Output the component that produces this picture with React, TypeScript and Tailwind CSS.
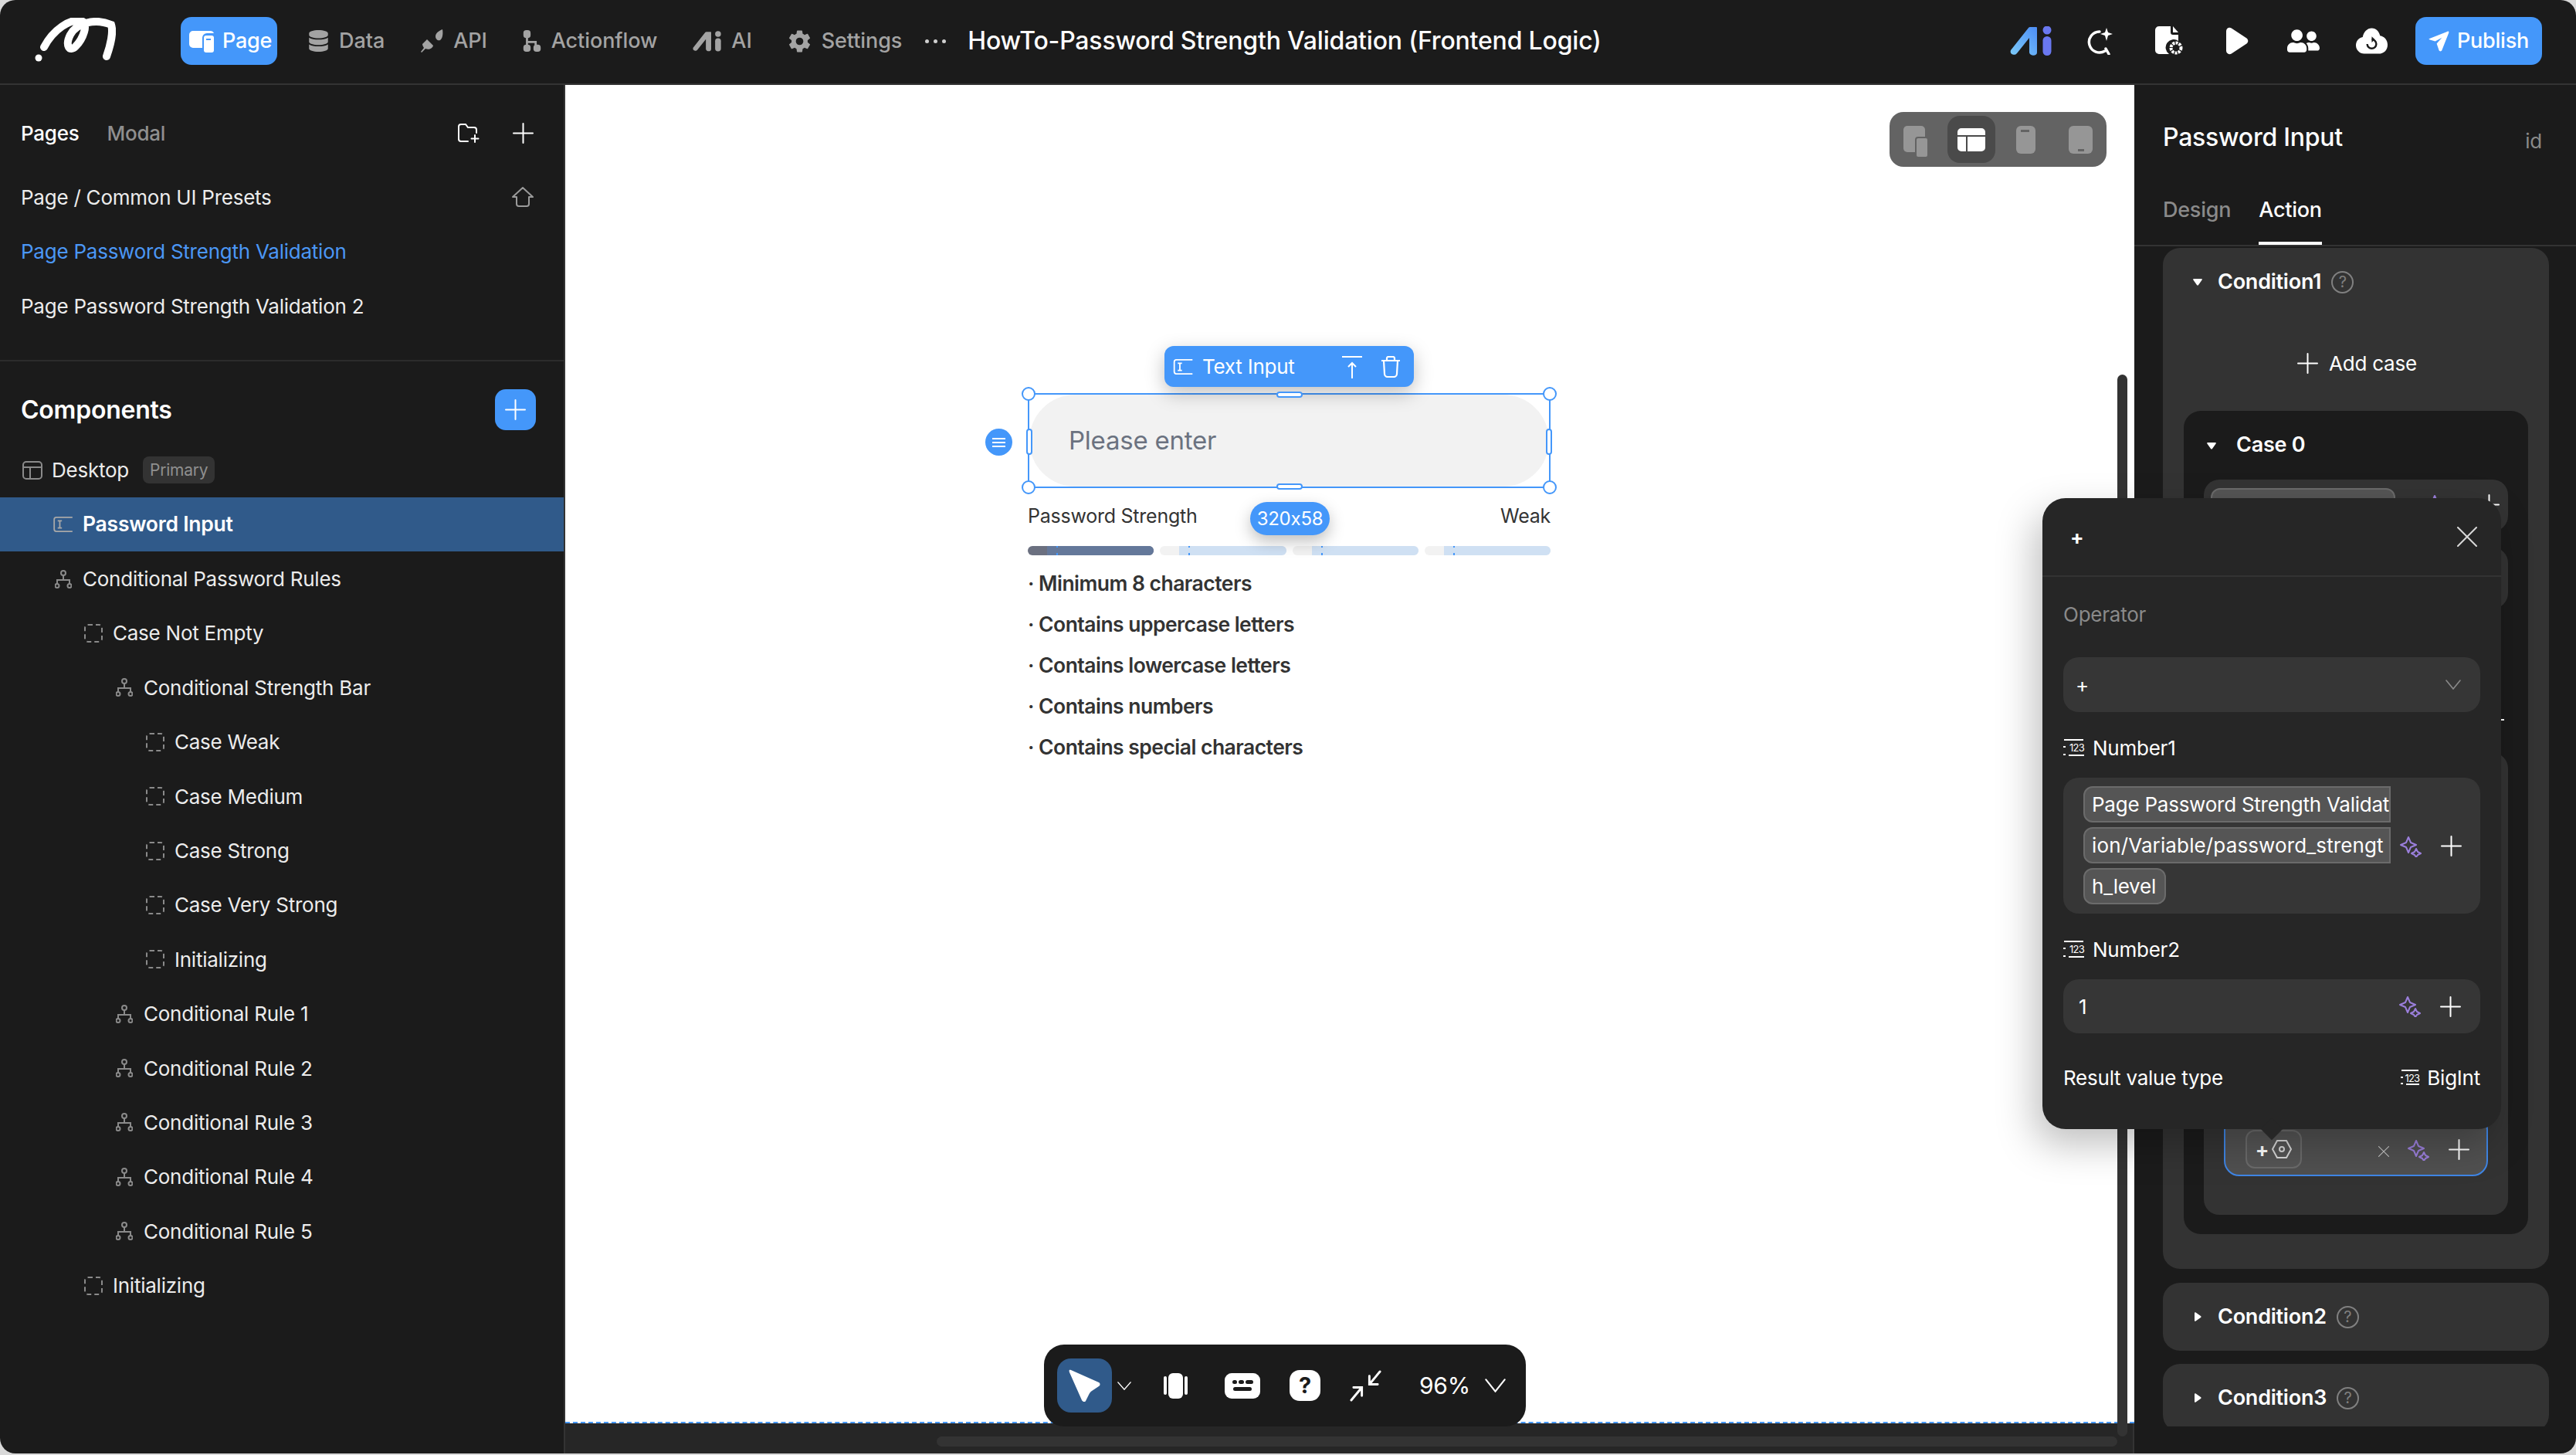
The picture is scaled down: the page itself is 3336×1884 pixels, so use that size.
import { FaDatabase, FaUserFriends } from "react-icons/fa";
import { IoSettingsSharp } from "react-icons/io5";

function Logo() {
  return (
    <svg viewBox="0 0 105 60" className="h-[60px] w-[105px]" fill="none" stroke="white" strokeWidth="10" strokeLinecap="round">
      <path d="M12 38C24 15 46 1 60 4 71 7 62 28 53 37 45 45 39 36 46 22 54 7 78 0 99 9 102 18 98 36 93 50" />
      <circle cx="5" cy="52" r="4.5" fill="white" stroke="none" />
    </svg>
  );
}

function Cross({ className, size = 27 }: { className?: string; size?: number }) {
  return (
    <svg viewBox="0 0 27 27" width={size} height={size} className={className} fill="none" stroke="currentColor" strokeWidth="2" strokeLinecap="round">
      <path d="M13.5 1v25M1 13.5h25" />
    </svg>
  );
}

function Close({ className, size = 26 }: { className?: string; size?: number }) {
  return (
    <svg viewBox="0 0 26 26" width={size} height={size} className={className} fill="none" stroke="currentColor" strokeWidth="2" strokeLinecap="round">
      <path d="M1 1l24 24M25 1L1 25" />
    </svg>
  );
}

function Caret({ className, w, h }: { className?: string; w: number; h: number }) {
  return (
    <svg viewBox="0 0 20 13" width={w} height={h} preserveAspectRatio="none" className={className} fill="none" stroke="currentColor" strokeWidth="1.6" strokeLinecap="round">
      <path d="M1 1l9 11 9-11" />
    </svg>
  );
}

function FolderAdd() {
  return (
    <svg viewBox="0 0 29 25" className="h-[25px] w-[29px]" fill="none" stroke="white" strokeWidth="2" strokeLinecap="round">
      <path d="M14 23H5a3 3 0 0 1-3-3V4a3 3 0 0 1 3-3h6l3 4h8a3 3 0 0 1 3 3v4" />
      <path d="M23 15v9M18.5 19.5h9" />
    </svg>
  );
}

function HomeIcon() {
  return (
    <svg viewBox="0 0 28 26" className="h-[26px] w-[28px]" fill="none" stroke="#9a9a9a" strokeWidth="2" strokeLinejoin="round">
      <path d="M14 1l13 12h-5v9a3 3 0 0 1-3 3H9a3 3 0 0 1-3-3v-9H1z" />
    </svg>
  );
}

function PageIcon() {
  return (
    <svg viewBox="0 0 33 30" className="h-[30px] w-[33px]" fill="white">
      <path d="M5 2h22a5 5 0 0 1 5 3H23a6 6 0 0 0-6 6v13H5a5 5 0 0 1-5-5V7a5 5 0 0 1 5-5z" />
      <rect x="19" y="8" width="13" height="22" rx="3" />
      <rect x="22" y="12" width="6" height="2" fill="#4497fa" />
    </svg>
  );
}

function ApiIcon() {
  return (
    <svg viewBox="0 0 30 32" className="h-[32px] w-[30px]" fill="#a3a3a3">
      <path d="M20 10c0-4 4-7 9-9 1 6 0 12-3 14-3 1-6-1-6-5z" />
      <path d="M3 20l6-6 8 8c-1 4-6 6-10 4l-5 5-1-1 4-5c-1-2-2-3-2-5z" />
    </svg>
  );
}

function FlowIcon({ className }: { className: string }) {
  return (
    <svg viewBox="0 0 24 30" className={className} fill="#a3a3a3">
      <rect x="0" y="0" width="10" height="11" rx="4" />
      <rect x="0" y="20" width="10" height="10" rx="4" />
      <rect x="14" y="20" width="10" height="10" rx="4" />
      <path d="M3.5 10h3v5h12v6h-3v-3h-9v3h-3z" />
    </svg>
  );
}

function AiMark({ a, b, c, id }: { a: string; b: string; c: string; id: string }) {
  return (
    <svg viewBox="0 0 54 38" className="h-full w-full">
      <defs>
        <linearGradient id={id} x1="0" y1="1" x2="1" y2="0">
          <stop offset="0" stopColor={a} />
          <stop offset="1" stopColor={b} />
        </linearGradient>
      </defs>
      <path d="M26 1h8a1 1 0 0 1 1 1v32c0 5-9 5-10 0V15L9 35c-3 4-10 1-8-4L24 2a3 3 0 0 1 2-1z" fill={`url(#${id})`} />
      <circle cx="48" cy="5" r="5.5" fill={c} />
      <rect x="42.5" y="13" width="11" height="25" rx="5.5" fill={c} />
    </svg>
  );
}

function SearchSpark() {
  return (
    <svg viewBox="0 0 34 36" className="h-[36px] w-[34px]" fill="none" stroke="white" strokeWidth="3.5" strokeLinecap="round">
      <path d="M17 6A13.5 13.5 0 1 0 24 31" />
      <path d="M25 28l4 7" />
      <path d="M26 1l2 6 6 2-6 2-2 7-2-7-6-2 6-2z" fill="white" stroke="none" />
    </svg>
  );
}

function DocGear() {
  return (
    <svg viewBox="0 0 36 38" className="h-[38px] w-[36px]" fill="white">
      <path d="M5 0h15v8a3 3 0 0 0 3 3h7v8a10 10 0 0 0-12 17H5a5 5 0 0 1-5-5V5a5 5 0 0 1 5-5z" />
      <path d="M23 0l7 8h-7z" />
      <circle cx="27" cy="28" r="6.5" fill="none" stroke="white" strokeWidth="4" strokeDasharray="3 1.2" />
    </svg>
  );
}

function PlayIcon() {
  return (
    <svg viewBox="0 0 30 36" className="h-[36px] w-[29px]" fill="white">
      <path d="M0 5c0-4 4-6 7-4l20 13c3 2 3 6 0 8L7 35c-3 2-7 0-7-4z" />
    </svg>
  );
}

function CloudIcon() {
  return (
    <svg viewBox="0 0 42 34" className="h-[34px] w-[41px]" fill="white">
      <path d="M21 0c6 0 10 5 11 10 6 1 10 6 10 12 0 7-5 12-12 12H11C5 34 0 29 0 23c0-6 4-10 9-11 1-7 6-12 12-12z" />
      <path d="M15 21a6 6 0 1 0 6-6" fill="none" stroke="#1b1b1b" strokeWidth="2.5" />
      <path d="M21 11v8l4-4z" fill="#1b1b1b" />
    </svg>
  );
}

function SendIcon() {
  return (
    <svg viewBox="0 0 28 28" className="h-[27px] w-[27px]" fill="white">
      <path d="M2 10L25 1c2-1 3 0 2 2l-9 23c-1 2-3 2-4 0l-3-9 7-8-9 5-7-2c-2-1-2-1 0-2z" />
    </svg>
  );
}

function BucketIcon() {
  return (
    <svg viewBox="0 0 26 28" className="h-[28px] w-[26px]" fill="none" stroke="white" strokeWidth="2.2" strokeLinejoin="round">
      <path d="M1 6h24M8 6V3a2 2 0 0 1 2-2h6a2 2 0 0 1 2 2v3" />
      <path d="M4 6l1 17a4 4 0 0 0 4 4h8a4 4 0 0 0 4-4l1-17" />
    </svg>
  );
}

function CaseIcon() {
  return <div className="h-[24px] w-[24px] rounded-[5px] border-2 border-dashed border-[#8a8a8a]" />;
}

function BranchIcon() {
  return (
    <svg viewBox="0 0 22 24" className="h-[24px] w-[22px]" fill="none" stroke="#8a8a8a" strokeWidth="2">
      <circle cx="11" cy="4" r="3" />
      <circle cx="3" cy="20.5" r="2.5" />
      <circle cx="19" cy="20.5" r="2.5" />
      <path d="M11 7v6M3 18v-5h16v5" />
    </svg>
  );
}

function LayoutIcon() {
  return (
    <svg viewBox="0 0 26 24" className="h-[24px] w-[26px]" fill="none" stroke="#8a8a8a" strokeWidth="2">
      <rect x="1" y="1" width="24" height="22" rx="4" />
      <path d="M1 8h24M10 8v15" />
    </svg>
  );
}

function InputIcon({ color }: { color: string }) {
  return (
    <svg viewBox="0 0 28 22" className="h-[20px] w-[27px]" fill="none" stroke={color} strokeWidth="2">
      <path d="M27 1H4a3 3 0 0 0-3 3v14a3 3 0 0 0 3 3h23" />
      <path d="M6 6h6M6 16h6M9 6v10" />
    </svg>
  );
}

function Sparkle() {
  return (
    <svg viewBox="0 0 28 28" className="h-[28px] w-[28px]" fill="none" stroke="#9b7fdc" strokeWidth="2" strokeLinejoin="round">
      <path d="M11 2l3 7 7 3-7 3-3 7-3-7-7-3 7-3z" />
      <path d="M21 17l2 4 4 2-4 2-2 3-2-3-4-2 4-2z" />
    </svg>
  );
}

function NumType({ small }: { small?: boolean }) {
  return (
    <div className={small ? "relative h-[20px] w-[24px] shrink-0" : "relative h-[22px] w-[27px] shrink-0"}>
      <div className="absolute left-[1px] right-[1px] top-0 h-[2px] bg-white" />
      <div className="absolute bottom-0 left-[7px] right-0 h-[2px] bg-white" />
      <span className="absolute right-0 top-[4px] text-[13px] leading-[14px] tracking-[-0.06em] text-white">123</span>
      <div className="absolute left-0 top-[9px] h-[2px] w-[3px] bg-white" />
      <div className="absolute bottom-[1px] left-0 h-[2px] w-[3px] bg-white" />
    </div>
  );
}

function Help() {
  return (
    <div className="flex h-[29px] w-[29px] items-center justify-center rounded-full border-2 border-[#808080] text-[20px] leading-none text-[#808080]">?</div>
  );
}

function Tri({ down }: { down?: boolean }) {
  return (
    <svg viewBox="0 0 12 12" className="h-[12px] w-[12px]" fill="white">
      {down ? <path d="M1 2h10c1 0 1 1 .6 1.6L7 10c-.5.8-1.5.8-2 0L.4 3.6C0 3 0 2 1 2z" /> : <path d="M2 1v10c0 1 1 1 1.6.6L10 7c.8-.5.8-1.5 0-2L3.6.4C3 0 2 0 2 1z" />}
    </svg>
  );
}

const navItems = [
  { label: "Data", icon: <FaDatabase className="h-[28px] w-[27px] text-[#a3a3a3]" /> },
  { label: "API", icon: <ApiIcon /> },
  { label: "Actionflow", icon: <FlowIcon className="h-[28px] w-[24px]" /> },
  { label: "AI", icon: <div className="h-[27px] w-[37px]"><AiMark a="#a3a3a3" b="#a3a3a3" c="#a3a3a3" id="navai" /></div> },
  { label: "Settings", icon: <IoSettingsSharp className="h-[31px] w-[31px] text-[#a3a3a3]" /> },
];

function TopBar() {
  return (
    <header className="flex h-[110px] shrink-0 items-center border-b-2 border-[#333333] bg-[#1b1b1b] pb-[2px]">
      <div className="ml-[45px] w-[189px]">
        <Logo />
      </div>
      <div className="flex h-[62px] w-[125px] items-center gap-[10px] rounded-[14px] bg-[#4497fa] pl-[11px]">
        <PageIcon />
        <span className="text-[27px] font-medium text-white">Page</span>
      </div>
      <nav className="ml-[40px] flex items-center gap-[46px] tracking-[-0.005em]">
        {navItems.map((item) => (
          <div key={item.label} className="flex items-center gap-[13px] text-[27px] font-medium text-[#a3a3a3]">
            {item.icon}
            <span>{item.label}</span>
          </div>
        ))}
      </nav>
      <div className="ml-[30px] flex w-[55px] gap-[6px]">
        <span className="h-[5px] w-[5px] rounded-full bg-[#cfcfcf]" />
        <span className="h-[5px] w-[5px] rounded-full bg-[#cfcfcf]" />
        <span className="h-[5px] w-[5px] rounded-full bg-[#cfcfcf]" />
      </div>
      <h1 className="text-[32px] font-medium tracking-[-0.006em] text-white">HowTo-Password Strength Validation (Frontend Logic)</h1>
      <div className="ml-auto flex items-center">
        <div className="h-[38px] w-[54px]"><AiMark a="#7ccbf8" b="#4d8df5" c="#6a78f0" id="topai" /></div>
        <div className="ml-[45px]"><SearchSpark /></div>
        <div className="ml-[55px]"><DocGear /></div>
        <div className="ml-[56px]"><PlayIcon /></div>
        <FaUserFriends className="ml-[50px] h-[38px] w-[42px] text-white" />
        <div className="ml-[47px]"><CloudIcon /></div>
        <div className="ml-[36px] mr-[44px] flex h-[62px] w-[164px] items-center justify-center gap-[10px] rounded-[14px] bg-[#4497fa] text-[27px] font-medium text-white">
          <SendIcon />
          <span>Publish</span>
        </div>
      </div>
    </header>
  );
}

const tree = [
  { label: "Password Input", pad: "pl-[69px]", kind: "input", selected: true },
  { label: "Conditional Password Rules", pad: "pl-[69px]", kind: "branch" },
  { label: "Case Not Empty", pad: "pl-[108px]", kind: "case" },
  { label: "Conditional Strength Bar", pad: "pl-[148px]", kind: "branch" },
  { label: "Case Weak", pad: "pl-[188px]", kind: "case" },
  { label: "Case Medium", pad: "pl-[188px]", kind: "case" },
  { label: "Case Strong", pad: "pl-[188px]", kind: "case" },
  { label: "Case Very Strong", pad: "pl-[188px]", kind: "case" },
  { label: "Initializing", pad: "pl-[188px]", kind: "case" },
  { label: "Conditional Rule 1", pad: "pl-[148px]", kind: "branch" },
  { label: "Conditional Rule 2", pad: "pl-[148px]", kind: "branch" },
  { label: "Conditional Rule 3", pad: "pl-[148px]", kind: "branch" },
  { label: "Conditional Rule 4", pad: "pl-[148px]", kind: "branch" },
  { label: "Conditional Rule 5", pad: "pl-[148px]", kind: "branch" },
  { label: "Initializing", pad: "pl-[108px]", kind: "case" },
];

function LeftPanel() {
  return (
    <aside className="flex w-[732px] shrink-0 flex-col border-r-2 border-[#333333] bg-[#1b1b1b] text-[26px] text-[#ececec]">
      <section className="h-[358px] border-b-2 border-[#2c2c2c]">
        <div className="flex h-[110px] items-center pl-[27px] pr-[39px] pt-[14px]">
          <span className="font-medium text-white">Pages</span>
          <span className="ml-[36px] font-medium text-[#8f8f8f]">Modal</span>
          <div className="ml-auto"><FolderAdd /></div>
          <Cross className="ml-[43px] text-white" />
        </div>
        <div className="flex h-[70px] items-center pl-[27px] pr-[39px]">
          <span>Page / Common UI Presets</span>
          <div className="ml-auto"><HomeIcon /></div>
        </div>
        <div className="flex h-[71px] items-center pl-[27px] text-[#4b97f5]">Page Password Strength Validation</div>
        <div className="flex h-[70px] items-center pl-[27px]">Page Password Strength Validation 2</div>
      </section>
      <div className="flex h-[105px] items-center pl-[27px] pr-[36px] pt-[20px]">
        <span className="text-[32px] font-semibold text-white">Components</span>
        <div className="ml-auto flex h-[53px] w-[53px] items-center justify-center rounded-[14px] bg-[#4497fa]">
          <Cross className="text-white" />
        </div>
      </div>
      <div className="flex h-[71px] items-center pl-[29px]">
        <div className="flex w-[26px] justify-center"><LayoutIcon /></div>
        <span className="ml-[12px]">Desktop</span>
        <span className="ml-[18px] flex h-[35px] items-center rounded-[8px] bg-[#333333] px-[9px] text-[21px] text-[#8f8f8f]">Primary</span>
      </div>
      {tree.map((row, i) => (
        <div key={i} className={row.selected ? "flex h-[70.4px] items-center bg-[#305a8a] pl-[69px] text-[26.5px] font-semibold text-white" : `flex h-[70.4px] items-center ${row.pad}`}>
          <div className="flex w-[26px] justify-center">
            {row.kind === "input" && <InputIcon color="#a8a8a8" />}
            {row.kind === "branch" && <BranchIcon />}
            {row.kind === "case" && <CaseIcon />}
          </div>
          <span className="ml-[12px]">{row.label}</span>
        </div>
      ))}
    </aside>
  );
}

function DeviceSwitch() {
  return (
    <div className="absolute right-[36px] top-[35px] flex h-[71px] w-[281px] items-center rounded-[18px] bg-[#636363] pl-[18px]">
      <div className="relative h-[60px] w-[38px]">
        <div className="absolute left-0 top-[12px] h-[34px] w-[28px] rounded-[5px] bg-[#969696]" />
        <div className="absolute left-[15px] top-[26px] h-[28px] w-[18px] rounded-[4px] border-2 border-[#636363] bg-[#969696]" />
      </div>
      <div className="ml-[19px] flex h-[61px] w-[62px] items-center justify-center rounded-[16px] bg-[#4a4a4a]">
        <svg viewBox="0 0 36 30" className="h-[30px] w-[36px]" fill="white">
          <path d="M5 0h26a5 5 0 0 1 5 5v4H0V5a5 5 0 0 1 5-5zM0 11h11v19H5a5 5 0 0 1-5-5zM13 11h23v14a5 5 0 0 1-5 5H13z" />
        </svg>
      </div>
      <div className="relative ml-[27px] h-[36px] w-[25px] rounded-[6px] bg-[#969696]">
        <div className="absolute left-[6px] top-[5px] h-[3px] w-[11px] bg-[#636363]" />
      </div>
      <div className="relative ml-[43px] h-[36px] w-[31px] rounded-[6px] bg-[#969696]">
        <div className="absolute bottom-[3px] left-[12px] h-[3px] w-[8px] bg-[#636363]" />
      </div>
    </div>
  );
}

function Handle({ className }: { className: string }) {
  return <div className={`absolute rounded-full border-2 border-[#4497fa] bg-white ${className}`} />;
}

function StrengthBar({ first }: { first?: boolean }) {
  return (
    <div className={first ? "relative h-[12px] flex-1 overflow-hidden rounded-full bg-[#6b7080]" : "relative h-[12px] flex-1 overflow-hidden rounded-full bg-[#f2f2f2]"}>
      <div className={first ? "absolute inset-y-0 left-[25px] right-0 bg-[#64789a]" : "absolute inset-y-0 left-[25px] right-0 bg-[#cfe0f3]"} />
      <div className="absolute left-[37px] top-0 h-[2px] w-[2px] bg-[#4497fa]" />
      <div className="absolute bottom-0 left-[37px] h-[3px] w-[2px] bg-[#4497fa]" />
    </div>
  );
}

const rules = ["Minimum 8 characters", "Contains uppercase letters", "Contains lowercase letters", "Contains numbers", "Contains special characters"];

function PasswordWidget() {
  return (
    <div className="ml-[599px] w-[677px] pt-[399px] text-[#333333]">
      <div className="relative h-[123px] border-2 border-[#4497fa]">
        <div className="flex h-full items-center rounded-full bg-[#f2f2f2] pl-[51px] text-[33px] text-[#6b7280]">Please enter</div>
        <div className="absolute left-[175px] top-[-63px] flex h-[53px] w-[323px] items-center rounded-[12px] bg-[#4497fa] pl-[11px] text-[26px] text-white shadow-[0_8px_24px_rgba(0,0,0,0.25)]">
          <InputIcon color="white" />
          <span className="ml-[11px]">Text Input</span>
          <svg viewBox="0 0 26 30" className="ml-auto h-[30px] w-[26px]" fill="none" stroke="white" strokeWidth="2">
            <path d="M0 2h26M13 30V10M8 15l5-5 5 5" />
          </svg>
          <div className="ml-[24px] mr-[17px]"><BucketIcon /></div>
        </div>
        <Handle className="left-[-10px] top-[-10px] h-[18px] w-[18px]" />
        <Handle className="right-[-10px] top-[-10px] h-[18px] w-[18px]" />
        <Handle className="bottom-[-10px] left-[-10px] h-[18px] w-[18px]" />
        <Handle className="bottom-[-10px] right-[-10px] h-[18px] w-[18px]" />
        <Handle className="left-[320px] top-[-4px] h-[8px] w-[34px]" />
        <Handle className="bottom-[-4px] left-[320px] h-[8px] w-[34px]" />
        <Handle className="left-[-4px] top-[44px] h-[34px] w-[8px]" />
        <Handle className="right-[-4px] top-[44px] h-[34px] w-[8px]" />
        <div className="absolute left-[-57px] top-[44px] flex h-[35px] w-[35px] flex-col items-center justify-center gap-[3px] rounded-full bg-[#4497fa]">
          <span className="h-[2px] w-[17px] bg-white" />
          <span className="h-[2px] w-[17px] bg-white" />
          <span className="h-[2px] w-[17px] bg-white" />
        </div>
        <div className="absolute left-[286px] top-[139px] z-10 flex h-[43px] w-[103px] items-center justify-center rounded-full bg-[#4497fa] text-[24px] text-white shadow-[0_8px_20px_rgba(0,0,0,0.25)]">320x58</div>
      </div>
      <div className="mt-[19px] flex h-[36px] items-center justify-between text-[25px]">
        <span>Password Strength</span>
        <span>Weak</span>
      </div>
      <div className="mt-[20px] flex gap-[8px]">
        <StrengthBar first />
        <StrengthBar />
        <StrengthBar />
        <StrengthBar />
      </div>
      <ul className="mt-[10px] text-[26.5px] font-semibold">
        {rules.map((rule) => (
          <li key={rule} className="flex h-[53px] items-center whitespace-pre tracking-[-0.02em]">· {rule}</li>
        ))}
      </ul>
    </div>
  );
}

function CanvasToolbar() {
  return (
    <div className="absolute bottom-[35px] left-[620px] flex h-[106px] w-[624px] items-center rounded-[26px] bg-[#1b1b1b] pl-[17px] text-white">
      <div className="flex h-[70px] w-[71px] items-center justify-center rounded-[18px] bg-[#305a8a]">
        <svg viewBox="0 0 42 42" className="h-[42px] w-[42px]" fill="white">
          <path d="M3 1l36 16c2 1 2 4 0 5l-9 6c-2 1-3 3-4 5l-4 8c-1 2-4 1-5-1L1 4C0 1 1 0 3 1z" />
        </svg>
      </div>
      <Caret className="ml-[7px]" w={18} h={11} />
      <div className="ml-[42px] flex h-[33px] items-center gap-[2px]">
        <span className="h-[24px] w-[4px] rounded-full bg-white" />
        <span className="h-[33px] w-[19px] rounded-[6px] bg-white" />
        <span className="h-[24px] w-[4px] rounded-full bg-white" />
      </div>
      <div className="ml-[48px] flex h-[33px] w-[46px] flex-col items-center justify-center gap-[4px] rounded-[9px] bg-white">
        <div className="flex gap-[2px]">
          <span className="h-[5px] w-[6px] rounded-full bg-[#1b1b1b]" />
          <span className="h-[5px] w-[7px] rounded-full bg-[#1b1b1b]" />
          <span className="h-[5px] w-[10px] rounded-full bg-[#1b1b1b]" />
        </div>
        <span className="h-[5px] w-[24px] rounded-full bg-[#1b1b1b]" />
      </div>
      <div className="ml-[38px] flex h-[40px] w-[40px] items-center justify-center rounded-[13px] bg-white text-[29px] font-bold text-[#1b1b1b]">?</div>
      <svg viewBox="0 0 42 42" className="ml-[38px] h-[41px] w-[41px]" fill="none" stroke="white" strokeWidth="3" strokeLinecap="round">
        <path d="M40 2L26 19M26 8v11h11M2 40l14-17M16 34V23H5" />
      </svg>
      <span className="ml-[49px] text-[30px]">96%</span>
      <Caret className="ml-[19px]" w={27} h={18} />
    </div>
  );
}

function Middle() {
  return (
    <main className="relative flex min-w-0 flex-1 flex-col overflow-hidden">
      <div className="relative flex-1 border-b-2 border-dashed border-[#4497fa] bg-white">
        <DeviceSwitch />
        <PasswordWidget />
      </div>
      <div className="relative h-[39px] shrink-0 border-r-2 border-[#333333] bg-[#262626]">
        <div className="absolute left-[481px] right-[20px] top-[17px] h-[13px] rounded-full bg-[#333333]" />
      </div>
      <div className="absolute right-[9px] top-[375px] h-[1375px] w-[13px] rounded-full bg-[#333333]" />
      <CanvasToolbar />
    </main>
  );
}

function ConditionHead({ label, open }: { label: string; open?: boolean }) {
  return (
    <div className="flex h-[88px] items-center pl-[39px]">
      <Tri down={open} />
      <span className="ml-[20px] text-[27px] font-semibold text-white">{label}</span>
      <div className="ml-[13px]"><Help /></div>
    </div>
  );
}

function RightPanel() {
  return (
    <aside className="flex w-[572px] shrink-0 flex-col overflow-hidden bg-[#1b1b1b] text-white">
      <div className="flex h-[113px] items-end justify-between pb-[21px] pl-[37px] pr-[44px]">
        <span className="text-[32px] font-medium">Password Input</span>
        <span className="text-[26px] text-[#8a8a8a]">id</span>
      </div>
      <div className="flex h-[96px] shrink-0 gap-[36px] border-b-2 border-[#333333] pl-[37px] text-[27px] font-medium">
        <span className="pt-[29px] text-[#8a8a8a]">Design</span>
        <span className="h-[94px] border-b-4 border-white pt-[29px]">Action</span>
      </div>
      <div className="h-[1528px] overflow-hidden pl-[37px] pr-[35px] pt-[2px]">
        <section className="h-[1322px] rounded-[22px] bg-[#333333]">
          <ConditionHead label="Condition1" open />
          <div className="flex h-[123px] items-center justify-center gap-[14px] pl-[3px] text-[26px]">
            <Cross />
            Add case
          </div>
          <div className="mx-[27px] h-[1066px] rounded-[22px] bg-[#1b1b1b]">
            <div className="flex h-[89px] items-center pl-[30px] text-[27px] font-semibold">
              <Tri down />
              <span className="ml-[26px]">Case 0</span>
            </div>
            <div className="mx-[26px] flex h-[67px] gap-[40px] rounded-[20px] bg-[#333333] pl-[9px] pt-[11px]">
              <div className="h-[47px] w-[239px] rounded-[12px] border-2 border-[#6b6b6b] bg-[#555555]" />
              <div className="mt-[8px]"><Sparkle /></div>
              <Cross className="mt-[8px]" />
            </div>
            <div className="mx-[26px] mt-[21px] h-[79px] rounded-[20px] bg-[#333333]" />
            <div className="mx-[26px] flex h-[187px] items-center justify-end">
              <span className="mr-[5px] mt-[100px] h-[2px] w-[5px] bg-white" />
            </div>
            <div className="mx-[26px] flex h-[598px] flex-col justify-end rounded-[20px] bg-[#333333] px-[26px] pb-[50px]">
              <div className="flex h-[80px] items-end rounded-[20px] border-2 border-[#3f86e6] bg-[#505050] pb-[8px] pl-[26px]">
                <div className="flex h-[50px] w-[73px] items-center justify-center gap-[4px] rounded-[12px] border-2 border-[#6b6b6b] bg-[#555555] text-[26px] font-bold">
                  +
                  <svg viewBox="0 0 26 24" className="h-[24px] w-[26px]" fill="none" stroke="#d8d8d8" strokeWidth="2">
                    <path d="M7 1h12l6 11-6 11H7L1 12z" />
                    <circle cx="13" cy="12" r="3" />
                  </svg>
                </div>
                <Close className="mb-[15px] ml-[99px] text-[#c8c8c8]" size={14} />
                <div className="mb-[10px] ml-[24px]"><Sparkle /></div>
                <Cross className="mb-[11px] ml-[25px]" />
              </div>
            </div>
          </div>
        </section>
        <section className="mt-[18px] h-[88px] rounded-[22px] bg-[#333333]">
          <ConditionHead label="Condition2" />
        </section>
        <section className="mt-[17px] h-[88px] rounded-[22px] bg-[#333333]">
          <ConditionHead label="Condition3" />
        </section>
      </div>
    </aside>
  );
}

const chipClass = "flex h-[47px] items-center overflow-hidden whitespace-nowrap border-2 border-[#6b6b6b] bg-[#555555] pl-[9px] text-[26px] leading-none";

function OperatorModal() {
  return (
    <div className="absolute left-[2645px] top-[645px] h-[817px] w-[594px] rounded-[30px] bg-[#262626] text-white shadow-[-10px_20px_50px_rgba(0,0,0,0.25)]">
      <div className="absolute bottom-[-10px] left-[287px] h-[20px] w-[20px] rotate-45 bg-[#262626]" />
      <div className="flex h-[102px] items-center justify-between border-b-2 border-[#333333] pl-[36px] pr-[31px]">
        <span className="text-[26px] font-bold">+</span>
        <Close className="text-[#d8d8d8]" />
      </div>
      <div className="relative px-[27px] text-[26px]">
        <div className="pt-[32px] leading-[34px] text-[#8a8a8a]">Operator</div>
        <div className="mt-[38px] flex h-[71px] items-center justify-between rounded-[20px] bg-[#363636] pl-[16px] pr-[25px]">
          <span>+</span>
          <Caret className="text-[#8a8a8a]" w={20} h={13} />
        </div>
        <div className="mt-[29px] flex h-[34px] items-center gap-[11px]">
          <NumType />
          <span>Number1</span>
        </div>
        <div className="mt-[22px] flex h-[176px] rounded-[20px] bg-[#363636] pl-[26px] pt-[11px]">
          <div className="flex w-[398px] flex-col gap-[6px]">
            <div className={`${chipClass} rounded-l-[12px]`}>Page Password Strength Validat</div>
            <div className={`${chipClass} rounded-l-[12px] tracking-[0.005em]`}>ion/Variable/password_strengt</div>
            <div className={`${chipClass} w-[107px] rounded-[12px]`}>h_level</div>
          </div>
          <div className="ml-[12px] mt-[64px]"><Sparkle /></div>
          <Cross className="ml-[25px] mt-[64px]" />
        </div>
        <div className="mt-[29px] flex h-[34px] items-center gap-[11px]">
          <NumType />
          <span>Number2</span>
        </div>
        <div className="mt-[22px] flex h-[70px] items-center rounded-[20px] bg-[#363636] pl-[20px]">
          <span>1</span>
          <div className="ml-auto"><Sparkle /></div>
          <Cross className="ml-[25px] mr-[25px]" />
        </div>
        <div className="mt-[40px] flex h-[34px] items-center justify-between">
          <span>Result value type</span>
          <div className="flex items-center gap-[10px]">
            <NumType small />
            <span>BigInt</span>
          </div>
        </div>
      </div>
    </div>
  );
}

export default function App() {
  return (
    <div className="relative h-[1884px] w-[3336px] overflow-hidden bg-[#d9d9d9] font-['Inter',sans-serif] tracking-[-0.015em]">
      <div className="flex h-[1882px] flex-col overflow-hidden rounded-[20px]">
        <TopBar />
        <div className="flex min-h-0 flex-1">
          <LeftPanel />
          <Middle />
          <RightPanel />
        </div>
      </div>
      <OperatorModal />
    </div>
  );
}
